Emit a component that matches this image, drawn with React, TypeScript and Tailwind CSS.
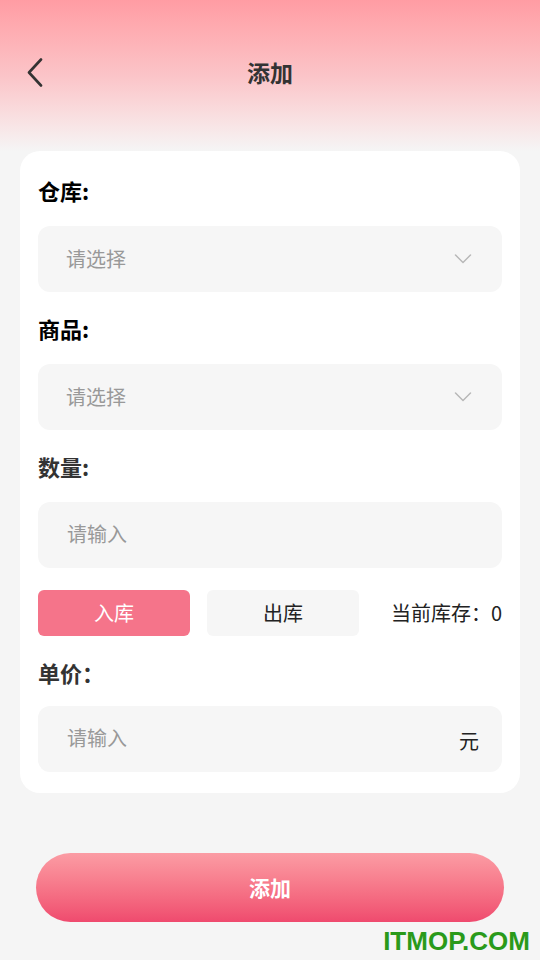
import { useState } from "react";

const font = "font-['Noto_Sans_CJK_SC','Noto_Sans',sans-serif]";

function Chevron() {
  return (
    <svg width="18" height="12" viewBox="0 0 18 12" fill="none">
      <path d="M1.5 2 L9 9.5 L16.5 2" stroke="#b8b8b8" strokeWidth="1.5" strokeLinecap="round" strokeLinejoin="round" />
    </svg>
  );
}

function Label({ children, dark }: { children: string; dark?: boolean }) {
  return (
    <div className={`h-[28px] leading-[28px] text-[22px] font-bold ${dark ? "text-black" : "text-[#333]"}`}>
      {children}
    </div>
  );
}

function SelectBox() {
  return (
    <div className="h-[66px] rounded-[12px] bg-[#f6f6f6] flex items-center pl-[28px] pr-[30px]">
      <span className="flex-1 text-[20px] text-[#999]">请选择</span>
      <Chevron />
    </div>
  );
}

function InputBox({ suffix }: { suffix?: string }) {
  return (
    <div className="h-[66px] rounded-[12px] bg-[#f6f6f6] flex items-center pl-[29px] pr-[23px]">
      <span className="flex-1 text-[20px] text-[#999] -mt-[2px]">请输入</span>
      {suffix && <span className="text-[20px] text-[#222] mt-[4px]">{suffix}</span>}
    </div>
  );
}

export default function App() {
  const [dir, setDir] = useState<"in" | "out">("in");

  const tab = (k: "in" | "out", text: string) => (
    <button
      onClick={() => setDir(k)}
      className={`w-[152px] h-[46px] rounded-[6px] text-[20px] ${dir === k ? "bg-[#f5748a] text-white" : "bg-[#f6f6f6] text-[#222]"}`}
    >
      {text}
    </button>
  );

  return (
    <div className={`relative min-h-[960px] bg-[#f5f5f5] ${font}`}>
      <div className="h-[151px] bg-gradient-to-b from-[#ff9ca3] via-[#fbc4c8] to-[#f5f5f5] pt-[50px]">
        <div className="relative h-[44px] flex items-center justify-center">
          <svg className="absolute left-[26px] top-[8px]" width="20" height="32" viewBox="0 0 20 32" fill="none">
            <path d="M15 1.5 L3 14.5 L15 27.5" stroke="#333" strokeWidth="2.6" strokeLinecap="round" strokeLinejoin="round" />
          </svg>
          <span className="text-[23px] font-bold text-[#333]">添加</span>
        </div>
      </div>

      <div className="mx-[20px] rounded-[20px] bg-white px-[18px] pt-[25px] pb-[21px] flex flex-col">
        <Label dark>仓库:</Label>
        <div className="mt-[22px]"><SelectBox /></div>
        <div className="mt-[22px]"><Label dark>商品:</Label></div>
        <div className="mt-[22px]"><SelectBox /></div>
        <div className="mt-[22px]"><Label>数量:</Label></div>
        <div className="mt-[22px]"><InputBox /></div>
        <div className="mt-[22px] flex items-center gap-[17px]">
          {tab("in", "入库")}
          {tab("out", "出库")}
          <span className="ml-auto text-[20px] text-[#222]">当前库存：0</span>
        </div>
        <div className="mt-[22px]"><Label>单价：</Label></div>
        <div className="mt-[20px]"><InputBox suffix="元" /></div>
      </div>

      <div className="mx-[36px] mt-[60px]">
        <button className="w-full h-[69px] rounded-full bg-gradient-to-b from-[#fb9ca4] to-[#ef4a6e] text-white text-[21px] font-bold">
          添加
        </button>
      </div>

      <div className="absolute right-[10px] top-[922px] font-['Liberation_Sans',sans-serif] font-bold text-[26px] text-[#2a9a1a]">
        ITMOP.COM
      </div>
    </div>
  );
}
